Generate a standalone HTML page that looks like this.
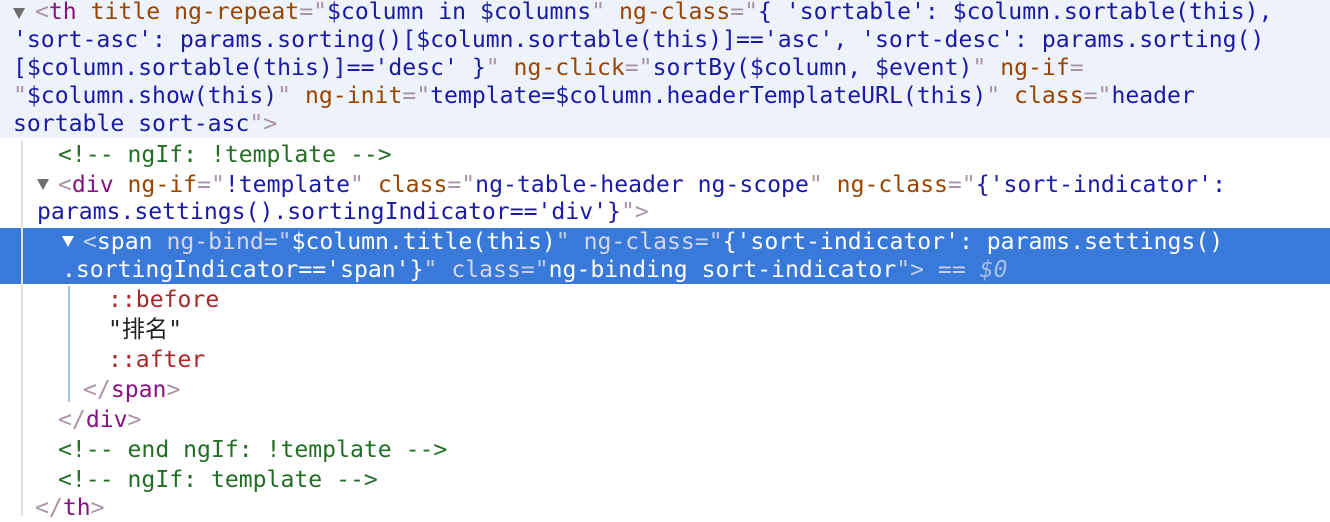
<!DOCTYPE html>
<html><head><meta charset="utf-8"><style>
body{margin:0;width:1330px;height:516px;overflow:hidden;background:#fff;position:relative;font-family:"DejaVu Sans Mono","Noto Sans CJK SC",monospace;font-size:23.1px;}
.l{position:absolute;white-space:pre;line-height:28px;height:28px;}
.t{color:#881280}.a{color:#994500}.v{color:#1a1aa6}.p{color:#a894a6}.c{color:#236e25}.ps{color:#a52a2a}.x{color:#222}
.tri{display:inline-block;position:absolute;width:0;height:0;border-left:6px solid transparent;border-right:6px solid transparent;border-top:11px solid #6e6e6e;}
.sel .t,.sel .v,.sel{color:#fff}.sel .a{color:#d6d6e8}.sel .p{color:#c4cfe8}
</style></head><body>
<div style="position:absolute;left:0;top:0;width:1330px;height:138px;background:#edf2fb"></div>
<div style="position:absolute;left:0;top:228px;width:1330px;height:56px;background:#3879d9"></div>
<div style="position:absolute;left:21px;top:140px;width:2px;height:376px;background:#e0e0e0"></div>
<div style="position:absolute;left:68px;top:286px;width:2px;height:116px;background:#a8c0e8"></div>
<div class="tri" style="left:13px;top:8px"></div>
<div class="l" style="left:35px;top:-2px"><span class="p">&lt;</span><span class="t">th</span> <span class="a">title</span> <span class="a">ng-repeat</span><span class="p">="</span><span class="v">$column in $columns</span><span class="p">"</span> <span class="a">ng-class</span><span class="p">="</span><span class="v">{ 'sortable': $column.sortable(this),</span></div>
<div class="l v" style="left:13px;top:26px">'sort-asc': params.sorting()[$column.sortable(this)]=='asc', 'sort-desc': params.sorting()</div>
<div class="l" style="left:13px;top:54px"><span class="v">[$column.sortable(this)]=='desc' }</span><span class="p">"</span> <span class="a">ng-click</span><span class="p">="</span><span class="v">sortBy($column, $event)</span><span class="p">"</span> <span class="a">ng-if</span><span class="p">=</span></div>
<div class="l" style="left:13px;top:82px"><span class="p">"</span><span class="v">$column.show(this)</span><span class="p">"</span> <span class="a">ng-init</span><span class="p">="</span><span class="v">template=$column.headerTemplateURL(this)</span><span class="p">"</span> <span class="a">class</span><span class="p">="</span><span class="v">header</span></div>
<div class="l" style="left:13px;top:110px"><span class="v">sortable sort-asc</span><span class="p">"&gt;</span></div>
<div class="l c" style="left:58px;top:141px">&lt;!-- ngIf: !template --&gt;</div>
<div class="tri" style="left:37px;top:179px"></div>
<div class="l" style="left:58px;top:171px"><span class="p">&lt;</span><span class="t">div</span> <span class="a">ng-if</span><span class="p">="</span><span class="v">!template</span><span class="p">"</span> <span class="a">class</span><span class="p">="</span><span class="v">ng-table-header ng-scope</span><span class="p">"</span> <span class="a">ng-class</span><span class="p">="</span><span class="v">{'sort-indicator':</span></div>
<div class="l" style="left:37px;top:198px"><span class="v">params.settings().sortingIndicator=='div'}</span><span class="p">"&gt;</span></div>
<div class="tri" style="left:62px;top:236px;border-top-color:#fff"></div>
<div class="l sel" style="left:83px;top:228px"><span class="p">&lt;</span><span class="t">span</span> <span class="a">ng-bind</span><span class="p">="</span><span class="v">$column.title(this)</span><span class="p">"</span> <span class="a">ng-class</span><span class="p">="</span><span class="v">{'sort-indicator': params.settings()</span></div>
<div class="l sel" style="left:62px;top:256px"><span class="v">.sortingIndicator=='span'}</span><span class="p">"</span> <span class="a">class</span><span class="p">="</span><span class="v">ng-binding sort-indicator</span><span class="p">"&gt;</span> <span style="color:#c4cfe8">==</span> <i style="color:#a9bde8">$0</i></div>
<div class="l ps" style="left:108px;top:286px">::before</div>
<div class="l x" style="left:108px;top:316px">"排名"</div>
<div class="l ps" style="left:108px;top:346px">::after</div>
<div class="l" style="left:83px;top:376px"><span class="p">&lt;/</span><span class="t">span</span><span class="p">&gt;</span></div>
<div class="l" style="left:58px;top:406px"><span class="p">&lt;/</span><span class="t">div</span><span class="p">&gt;</span></div>
<div class="l c" style="left:58px;top:436px">&lt;!-- end ngIf: !template --&gt;</div>
<div class="l c" style="left:58px;top:466px">&lt;!-- ngIf: template --&gt;</div>
<div class="l" style="left:35px;top:494px"><span class="p">&lt;/</span><span class="t">th</span><span class="p">&gt;</span></div>
</body></html>
